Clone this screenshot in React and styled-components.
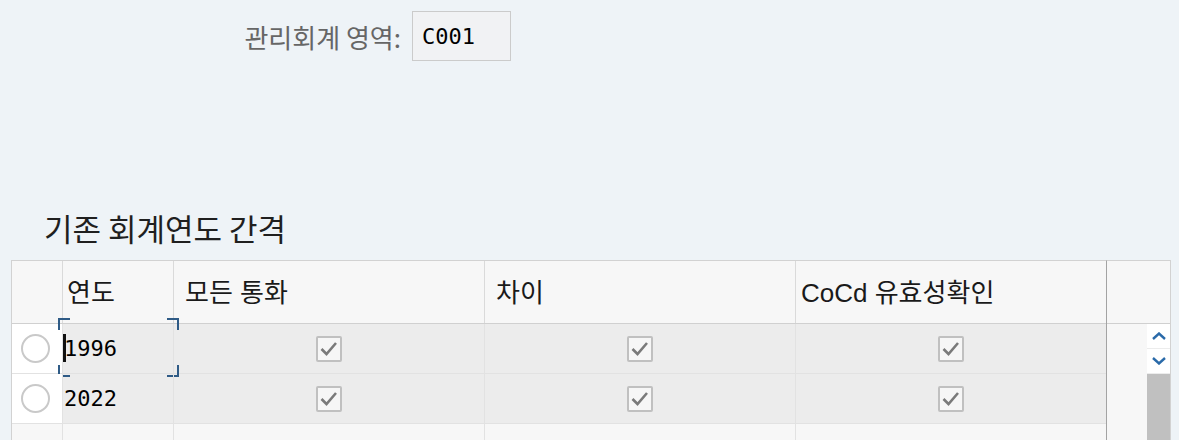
import React from 'react'
import styled, { createGlobalStyle } from 'styled-components'

const GlobalStyle = createGlobalStyle`
    html, body {
        margin: 0;
        padding: 0;
        background-color: #eef3f7;
        overflow: hidden;
    }
    body {
        font-family: "Noto Sans CJK KR", "Noto Sans", sans-serif;
    }
`

const Page = styled.div`
    width: 1179px;
    height: 440px;
    padding-top: 11px;
    box-sizing: border-box;
    overflow: hidden;
`
const FormRow = styled.div`
    display: flex;
    align-items: center;
    gap: 11px;
    height: 50px;
`
const FieldLabel = styled.label`
    width: 401px;
    text-align: right;
    font-size: 26px;
    color: #666666;
    font-family: "Noto Sans CJK KR", sans-serif;
`
const FieldBox = styled.div`
    width: 99px;
    height: 50px;
    box-sizing: border-box;
    border: 1px solid #cbcbcb;
    background-color: #f1f2f4;
    display: flex;
    align-items: center;
    padding-left: 9px;
    font-family: "DejaVu Sans Mono", monospace;
    font-size: 22px;
    color: #000;
`
const Title = styled.h2`
    margin: 146px 0 12px 0;
    padding-left: 44px;
    font-size: 31px;
    font-weight: 400;
    line-height: 41px;
    color: #1f1f1f;
    font-family: "Noto Sans CJK KR", sans-serif;
`
const Table = styled.div`
    margin-left: 11px;
    display: flex;
    width: 1160px;
`
const Main = styled.div`
    width: 1096px;
    box-sizing: border-box;
    border-left: 1px solid #d2d2d2;
    border-right: 1px solid #a3a3a3;
    border-top: 1px solid #d2d2d2;
`
const Side = styled.div`
    width: 64px;
    box-sizing: border-box;
    border-top: 1px solid #d2d2d2;
    border-right: 1px solid #d2d2d2;
    display: flex;
    flex-direction: column;
`
const Row = styled.div`
    display: grid;
    grid-template-columns: 51px 111px 311px 311px 310px;
    height: ${p => (p.$header ? '63px' : '50px')};
    box-sizing: border-box;
    border-bottom: 1px solid ${p => (p.$header ? '#d0d0d0' : '#e2e2e2')};
    background-color: ${p => (p.$filled ? '#ececec' : '#f7f7f7')};
`
const Cell = styled.div`
    position: relative;
    display: flex;
    align-items: center;
    justify-content: ${p => (p.$center ? 'center' : 'flex-start')};
    padding-left: ${p => p.$pad || 0}px;
    box-sizing: border-box;
    border-right: ${p => (p.$last ? 'none' : `1px solid ${p.$header ? '#dadada' : '#e2e2e2'}`)};
    background-color: ${p => p.$bg || 'transparent'};
`
const HeadText = styled.span`
    font-family: "Liberation Sans", "Noto Sans CJK KR", sans-serif;
    font-size: 26px;
    color: #1a1a1a;
    margin-top: -3px;
`
const YearText = styled.span`
    font-family: "DejaVu Sans Mono", monospace;
    font-size: 22px;
    color: #000;
`
const Radio = styled.span`
    width: 29px;
    height: 29px;
    margin-left: 9px;
    box-sizing: border-box;
    border-radius: 50%;
    border: 2px solid #c9c9c9;
    background-color: #fff;
`
const Caret = styled.span`
    position: absolute;
    left: 0;
    top: 10px;
    width: 3px;
    height: 28px;
    background-color: #111;
`
const Corner = styled.span`
    position: absolute;
    width: 10px;
    height: 10px;
    border-color: #2f5b86;
    border-style: solid;
    border-width: 0;
    ${p => (p.$v === 'top' ? 'top: -6px; border-top-width: 2px;' : 'bottom: -4px; border-bottom-width: 2px;')}
    ${p => (p.$h === 'left' ? 'left: -5px; border-left-width: 2px;' : 'right: -6px; border-right-width: 2px;')}
`
const CheckBox = styled.span`
    width: 26px;
    height: 26px;
    box-sizing: border-box;
    border: 2px solid #c0c0c0;
    border-radius: 2px;
    background-color: #f6f6f6;
    display: flex;
    align-items: center;
    justify-content: center;
`
const SideHead = styled.div`
    height: 63px;
    box-sizing: border-box;
    border-bottom: 1px solid #d0d0d0;
    background-color: #f7f7f7;
`
const SideBody = styled.div`
    display: flex;
    flex: 1;
`
const Filler = styled.div`
    width: 40px;
    height: 150px;
    background-color: #f7f7f7;
`
const ScrollBar = styled.div`
    width: 23px;
    display: flex;
    flex-direction: column;
`
const ScrollBtn = styled.div`
    height: 24px;
    background-color: #fff;
    border-bottom: 1px solid #ececec;
    display: flex;
    align-items: center;
    justify-content: center;
`
const Thumb = styled.div`
    flex: 1;
    background-color: #c0c0c0;
`

const Check = () => (
  <CheckBox>
    <svg width="22" height="22" viewBox="0 0 22 22">
      <path d="M3.5 11 L8.5 16 L18 5" fill="none" stroke="#7a7a7a" strokeWidth="2.6" />
    </svg>
  </CheckBox>
)

const Chevron = ({ up }) => (
  <svg width="14" height="8" viewBox="0 0 14 8">
    <path d={up ? 'M1 7 L7 1.5 L13 7' : 'M1 1 L7 6.5 L13 1'} fill="none" stroke="#2a6aa9" strokeWidth="2.4" />
  </svg>
)

const years = ['1996', '2022']

function App() {
  return (
    <Page>
      <GlobalStyle />
      <FormRow>
        <FieldLabel>관리회계 영역:</FieldLabel>
        <FieldBox>C001</FieldBox>
      </FormRow>
      <Title>기존 회계연도 간격</Title>
      <Table>
        <Main>
          <Row $header>
            <Cell $header />
            <Cell $header $pad={4}><HeadText>연도</HeadText></Cell>
            <Cell $header $pad={11}><HeadText>모든 통화</HeadText></Cell>
            <Cell $header $pad={11}><HeadText>차이</HeadText></Cell>
            <Cell $header $last $pad={5}><HeadText>CoCd 유효성확인</HeadText></Cell>
          </Row>
          {years.map((y, i) => (
            <Row key={y} $filled>
              <Cell $bg="#ffffff"><Radio /></Cell>
              <Cell $pad={1}>
                <YearText>{y}</YearText>
                {i === 0 && (
                  <>
                    <Caret />
                    <Corner $v="top" $h="left" />
                    <Corner $v="top" $h="right" />
                    <Corner $v="bottom" $h="left" />
                    <Corner $v="bottom" $h="right" />
                  </>
                )}
              </Cell>
              <Cell $center><Check /></Cell>
              <Cell $center><Check /></Cell>
              <Cell $center $last><Check /></Cell>
            </Row>
          ))}
          <Row>
            <Cell />
            <Cell />
            <Cell />
            <Cell />
            <Cell $last />
          </Row>
        </Main>
        <Side>
          <SideHead />
          <SideBody>
            <Filler />
            <ScrollBar>
              <ScrollBtn><Chevron up /></ScrollBtn>
              <ScrollBtn><Chevron /></ScrollBtn>
              <Thumb />
            </ScrollBar>
          </SideBody>
        </Side>
      </Table>
    </Page>
  )
}

export default App
